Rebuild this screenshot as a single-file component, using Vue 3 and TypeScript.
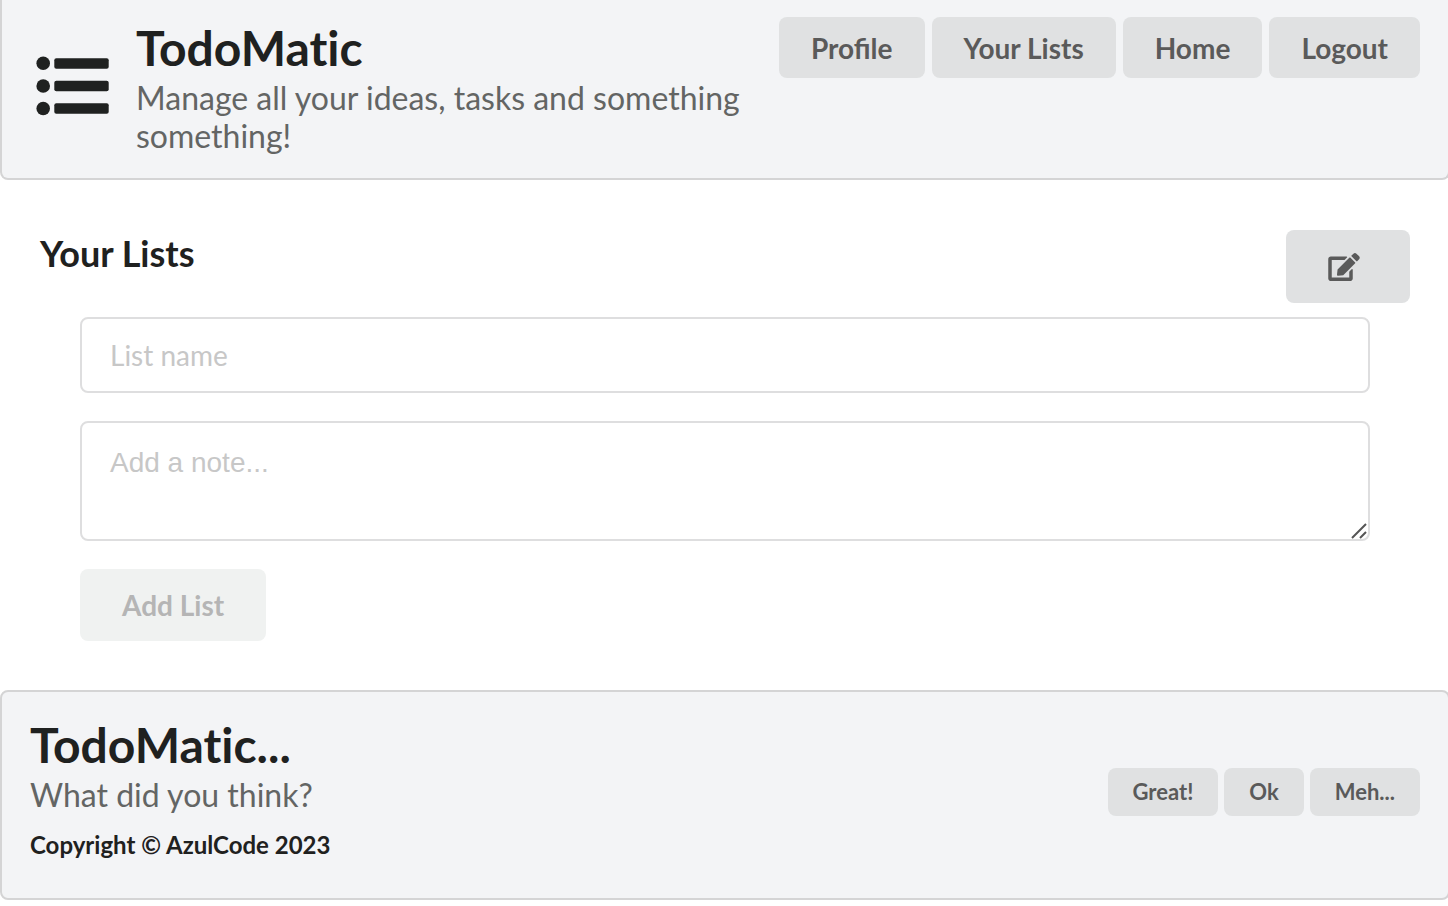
<script setup lang="ts">
import { computed, ref } from 'vue'

const navItems: string[] = ['Profile', 'Your Lists', 'Home', 'Logout']
const ratings: string[] = ['Great!', 'Ok', 'Meh...']

const listName = ref('')
const note = ref('')
const formOpen = ref(true)
const canAdd = computed(() => listName.value.trim().length > 0)

function addList(): void {
  listName.value = ''
  note.value = ''
}
</script>

<template>
  <div class="app">
    <header class="panel top">
      <div class="brand">
        <svg class="logo" viewBox="0 0 73 60" aria-hidden="true">
          <g fill="currentColor">
            <circle cx="7.2" cy="7.3" r="6.8" />
            <circle cx="7.2" cy="30" r="6.8" />
            <circle cx="7.2" cy="52.5" r="6.8" />
            <rect x="18.3" y="2.2" width="54.4" height="10.6" rx="2" />
            <rect x="18.3" y="24.8" width="54.4" height="10.4" rx="2" />
            <rect x="18.3" y="47.2" width="54.4" height="10.6" rx="2" />
          </g>
        </svg>
        <div>
          <h1 class="title">TodoMatic</h1>
          <p class="subtitle">Manage all your ideas, tasks and something something!</p>
        </div>
      </div>
      <nav class="nav">
        <button v-for="item in navItems" :key="item" type="button" class="btn nav-btn">{{ item }}</button>
      </nav>
    </header>

    <main class="main">
      <div class="heading">
        <h2 class="section-title">Your Lists</h2>
        <button type="button" class="btn edit-btn" aria-label="Edit lists" @click="formOpen = !formOpen">
          <svg class="edit-icon" viewBox="0 0 576 512" aria-hidden="true">
            <path
              fill="currentColor"
              d="M402.6 83.2l90.2 90.2c3.8 3.8 3.8 10 0 13.8L274.4 405.6l-92.8 10.3c-12.4 1.4-22.9-9.1-21.5-21.5l10.3-92.8L388.8 83.2c3.8-3.8 10-3.8 13.8 0zm162-22.9l-48.8-48.8c-15.2-15.2-39.9-15.2-55.2 0l-35.4 35.4c-3.8 3.8-3.8 10 0 13.8l90.2 90.2c3.8 3.8 10 3.8 13.8 0l35.4-35.4c15.2-15.3 15.2-40 0-55.2zM384 346.2V448H64V128h229.8c3.2 0 6.2-1.3 8.5-3.5l40-40c7.6-7.6 2.2-20.5-8.5-20.5H48C21.5 64 0 85.5 0 112v352c0 26.5 21.5 48 48 48h352c26.5 0 48-21.5 48-48V306.2c0-10.7-12.9-16-20.5-8.5l-40 40c-2.2 2.3-3.5 5.3-3.5 8.5z"
            />
          </svg>
        </button>
      </div>

      <form v-if="formOpen" class="form" @submit.prevent="addList">
        <input v-model="listName" class="field" type="text" placeholder="List name" aria-label="List name" />
        <div class="note">
          <textarea v-model="note" class="field area" placeholder="Add a note..." aria-label="Add a note"></textarea>
          <svg class="grip" viewBox="0 0 16 16" aria-hidden="true">
            <path d="M1 15L15 1M9 15L15 9" stroke="currentColor" stroke-width="2" fill="none" />
          </svg>
        </div>
        <button type="submit" class="btn add-btn" :disabled="!canAdd">Add List</button>
      </form>
    </main>

    <footer class="panel bottom">
      <div>
        <h2 class="title">TodoMatic...</h2>
        <p class="subtitle">What did you think?</p>
        <p class="copyright">Copyright © AzulCode 2023</p>
      </div>
      <div class="ratings">
        <button v-for="rating in ratings" :key="rating" type="button" class="btn small-btn">{{ rating }}</button>
      </div>
    </footer>
  </div>
</template>

<style>
body {
  margin: 0;
  background: #ffffff;
}
</style>

<style scoped>
.app {
  overflow: hidden;
  color: #1f2120;
  font-family: Lato, "Liberation Sans", sans-serif;
}

.app * {
  box-sizing: border-box;
}

h1,
h2,
p {
  margin: 0;
}

/* Panels run past the right edge so that side's border is out of view. */
.panel {
  display: flex;
  justify-content: space-between;
  margin-right: -2px;
  border: 2px solid #d4d4d5;
  border-radius: 8px;
  background: #f3f4f6;
}

.top {
  align-items: flex-start;
  gap: 16px;
  border-top: 0;
  border-radius: 0 0 8px 8px;
  padding: 17px 28px 23px 34px;
}

.brand {
  display: flex;
  align-items: center;
  gap: 27px;
  max-width: 720px;
}

.logo {
  flex: none;
  width: 73px;
  height: 60px;
}

.title {
  font-size: 48px;
  font-weight: 700;
  font-variant-ligatures: no-common-ligatures;
  line-height: 61px;
}

.subtitle {
  padding-top: 1px;
  color: #636564;
  font-size: 32px;
  font-variant-ligatures: no-common-ligatures;
  line-height: 38px;
}

.nav {
  display: flex;
  flex: none;
  gap: 7px;
}

.btn {
  border: 0;
  border-radius: 8px;
  background: #e0e1e2;
  color: #5a5a5a;
  font-family: inherit;
  font-weight: 700;
  cursor: pointer;
}

.nav-btn {
  height: 61px;
  padding: 0 32px;
  font-size: 28px;
}

.main {
  padding: 50px 38px 49px 40px;
}

.heading {
  display: flex;
  align-items: flex-start;
  justify-content: space-between;
}

.section-title {
  font-size: 36px;
  font-weight: 700;
  line-height: 46px;
}

.edit-btn {
  display: flex;
  align-items: center;
  justify-content: center;
  width: 124px;
  height: 73px;
  padding: 0 8px 0 0;
}

.edit-icon {
  width: 32px;
  height: 28px;
}

.form {
  display: flex;
  flex-direction: column;
  align-items: flex-start;
  gap: 28px;
  padding: 14px 40px 0;
}

.field {
  display: block;
  width: 100%;
  height: 76px;
  border: 2px solid #dededf;
  border-radius: 8px;
  padding: 0 28px;
  background: #ffffff;
  color: #1f2120;
  font-family: inherit;
  font-size: 28px;
  outline: none;
}

.field:focus {
  border-color: #85b7d9;
}

.field::placeholder {
  color: #c7c7c7;
  opacity: 1;
}

.note {
  position: relative;
  width: 100%;
}

.area {
  height: 120px;
  padding: 22px 28px;
  font-family: "Liberation Sans", Arial, sans-serif;
  line-height: 36px;
  resize: vertical;
}

.area::-webkit-resizer {
  background: transparent;
}

.grip {
  position: absolute;
  right: 3px;
  bottom: 2px;
  width: 16px;
  height: 16px;
  color: #555555;
  pointer-events: none;
}

.add-btn {
  height: 72px;
  padding: 0 42px;
  font-size: 28px;
}

.add-btn:disabled {
  background: #f0f2f1;
  color: #b5b5b5;
  cursor: default;
}

.bottom {
  align-items: flex-start;
  padding: 22px 28px 38px;
}

.copyright {
  padding-top: 16px;
  font-size: 24px;
  font-weight: 700;
  line-height: 30px;
}

.ratings {
  display: flex;
  gap: 6px;
  padding-top: 54px;
}

.small-btn {
  height: 48px;
  padding: 0 25px 2px;
  font-size: 22px;
}
</style>
